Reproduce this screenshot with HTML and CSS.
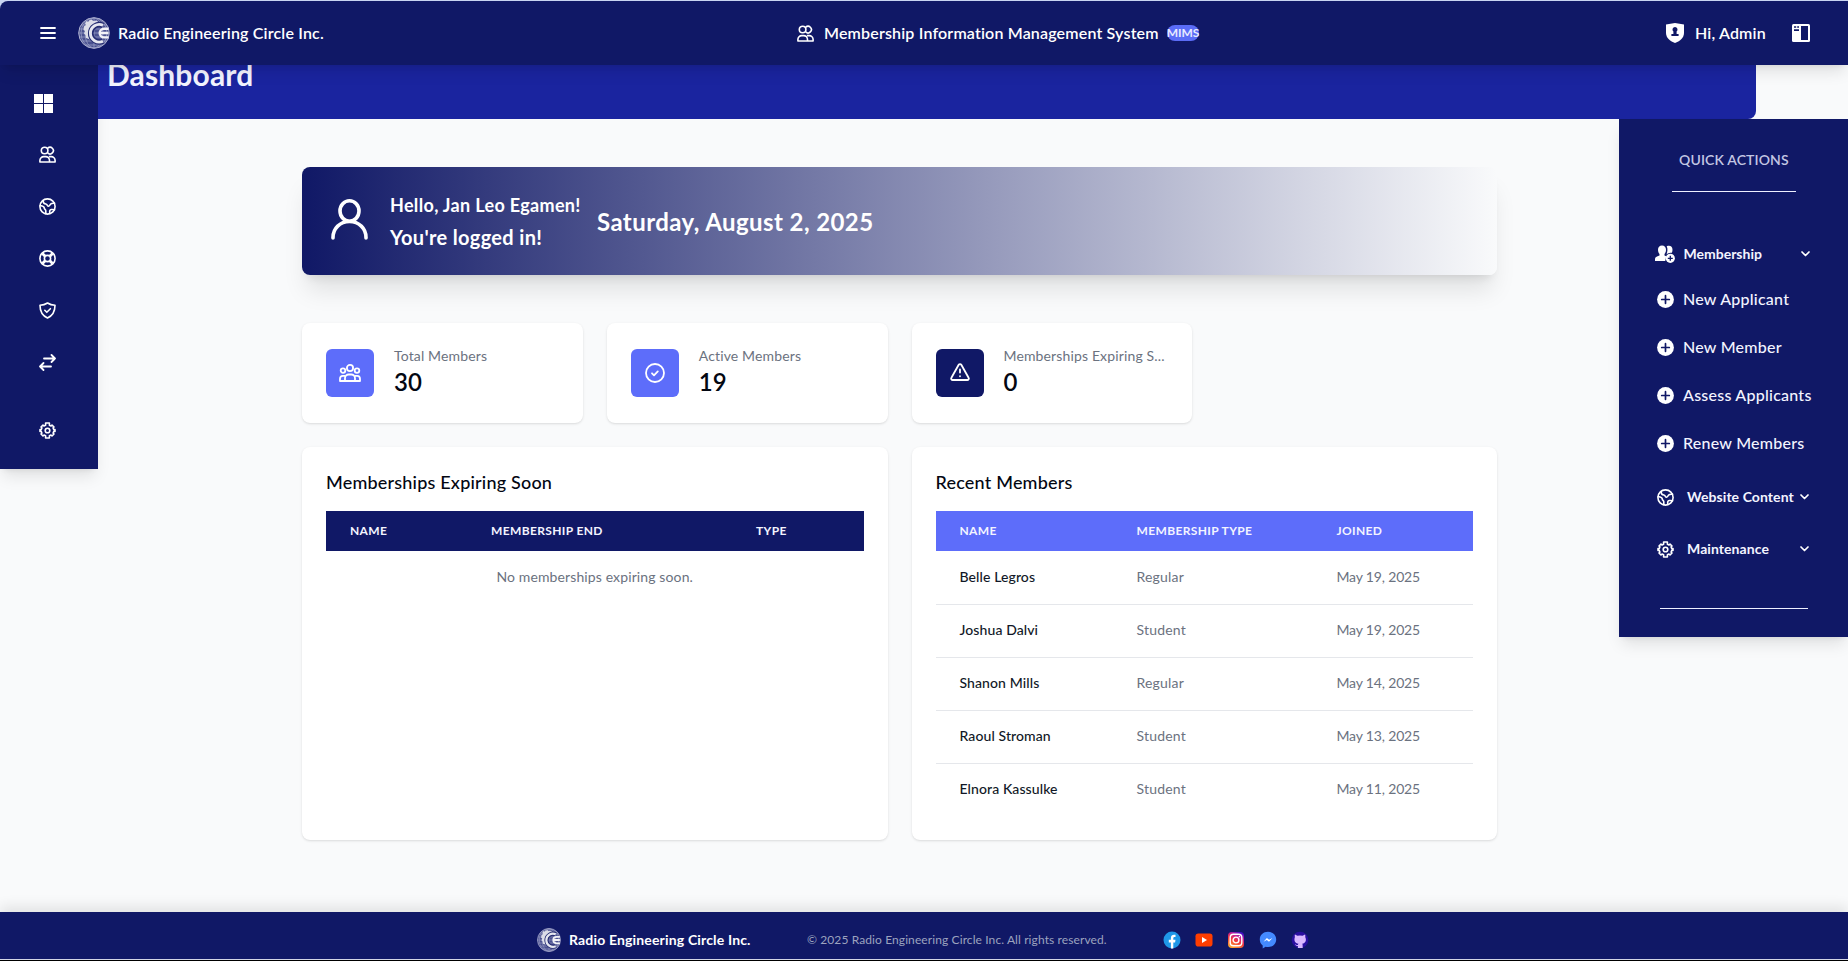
FILE: index.html
```
<!DOCTYPE html>
<html lang="en">
<head>
<meta charset="utf-8">
<title>Dashboard</title>
<link rel="stylesheet" href="styles.css">
</head>
<body>
<svg class="defs" width="0" height="0">
  <symbol id="logo" viewBox="0 0 32 32">
    <circle cx="16" cy="16" r="15.300" fill="#4a5190" stroke="#b4b7d4" stroke-width="1"/>
    <g fill="none" stroke="#989cc4" stroke-width=".8">
      <ellipse cx="16" cy="16" rx="9" ry="15"/><ellipse cx="16" cy="16" rx="13" ry="15"/>
      <path d="M16 1v30M1 16h30M3 8h26M2 12h28M2 20h28M3.500 24h25M8 28h16"/>
    </g>
    <path d="M19 3.500 15 4l-1-1.500-3 1L10.500 5 8.500 4 7 6.500 8 8 5.800 9.500 5.500 13l1.500 1-1 2.500 1.500 1.500.5 3 3 1 2 2a11 11 0 0 1 1.500-16L20 5z" fill="#dcdde8"/>
    <path d="M25 8.500a8.600 8.600 0 1 0 0 15.500" fill="none" stroke="#262d72" stroke-width="5.500"/>
    <path d="M25 8.300a8.800 8.800 0 1 0 0 15.900" fill="none" stroke="#e6e7f0" stroke-width="2.900"/>
    <path d="M30.500 11.800h-4.500a4.300 4.300 0 0 0 0 8.600h4.500M22.500 16h8" fill="none" stroke="#f2f2f7" stroke-width="2.400"/>
  </symbol>
  <symbol id="users" viewBox="0 0 17 17">
    <g fill="none" stroke="currentColor" stroke-width="1.600" stroke-linejoin="round">
      <circle cx="5.600" cy="4.500" r="3.300"/>
      <path d="M8.700 2.200a3.300 3.300 0 1 1 0 4.700"/>
      <path d="M.9 16v-1.500A3.900 3.900 0 0 1 4.800 10.600h1.800A3.900 3.900 0 0 1 10.500 14.500V16zM9.800 10.600h2.400a3.900 3.900 0 0 1 3.900 3.900V16h-5.600"/>
    </g>
  </symbol>
  <symbol id="globe" viewBox="0 0 17 17">
    <g fill="none" stroke="currentColor" stroke-width="1.600" stroke-linejoin="round" stroke-linecap="round">
      <circle cx="8.500" cy="8.500" r="7.600"/>
      <path d="M4 2.600c.2 2.300 1 3.200 2.800 3.400 1.500.2 1.300 2 2.400 2.200 1.400.3 1.700-1.500 2.700-2.400.9-.7 2.500-.5 3.600-.7M1.200 7.500c1.800.3 4 .8 4 2.300 0 1.700 1.600 1.400 1.600 3v3M10.800 15.500c-.3-2.300-.2-3.800 1.500-4 1.500-.2 2.300 0 3.200.3"/>
    </g>
  </symbol>
  <symbol id="gear" viewBox="0 0 17 17">
    <g fill="none" stroke="currentColor" stroke-width="1.600" stroke-linejoin="round">
      <path d="M16 7.600h-1.200l-.7-1.700.9-.9-2-2-1 .9-1.600-.7V1H6.600v2.200L5 3.900 4 3 2 5l.9.9-.7 1.700H1v1.800h1.200l.7 1.700L2 12l2 2 1-.9 1.600.7V16h3.800v-2.200l1.600-.7 1 .9 2-2-.9-.9.700-1.700H16z"/>
      <circle cx="8.500" cy="8.500" r="2.300"/>
    </g>
  </symbol>
  <symbol id="plus" viewBox="0 0 17 17">
    <circle cx="8.500" cy="8.500" r="8.400" fill="#fff"/>
    <path d="M8.500 4.700v7.600M4.700 8.500h7.600" stroke="#101866" stroke-width="1.700" stroke-linecap="round"/>
  </symbol>
  <symbol id="chevron" viewBox="0 0 9 6">
    <path d="M1 1l3.500 3.500L8 1" fill="none" stroke="#fff" stroke-width="1.700" stroke-linecap="round" stroke-linejoin="round"/>
  </symbol>
</svg>

<header class="topbar">
  <div class="topbar-left">
    <svg class="burger" viewBox="0 0 16 14"><path d="M1 2h14M1 7h14M1 12h14" stroke="#fff" stroke-width="1.800" stroke-linecap="round"/></svg>
    <svg class="logo"><use href="#logo"/></svg>
    <span class="brand">Radio Engineering Circle Inc.</span>
  </div>
  <div class="topbar-title">
    <svg class="icon"><use href="#users"/></svg>
    <span class="system">Membership Information Management System</span>
    <span class="badge">MIMS</span>
  </div>
  <div class="topbar-right">
    <svg class="shield" viewBox="0 0 18 20"><path d="M9 0 18 1.500V10c0 5-4.500 8.500-9 10C4.500 18.500 0 15 0 10V1.500z" fill="#fff"/><path d="M9 4a2.600 2.600 0 0 1 1.600 4.600V11h2v2H5.400v-2h2V8.600A2.600 2.600 0 0 1 9 4z" fill="#101866"/></svg>
    <span class="hi">Hi, Admin</span>
    <svg class="panel-icon" viewBox="0 0 18 18"><rect width="18" height="18" rx="1.500" fill="#fff"/><path d="M9 2h7v14H9zM2 2.200h2.200v1.600H2zM5.200 2.200h1.800v1.600H5.200zM2 5.300h5V7H2z" fill="#101866"/></svg>
  </div>
</header>

<div class="stage">
  <nav class="sidebar">
    <svg class="grid-icon" viewBox="0 0 19 19"><path d="M0 0h9v9H0zM10 0h9v9h-9zM0 10h9v9H0zM10 10h9v9h-9z" fill="#fff"/></svg>
    <svg class="icon"><use href="#users"/></svg>
    <svg class="icon"><use href="#globe"/></svg>
    <svg class="icon" viewBox="0 0 17 17"><g fill="none" stroke="#fff" stroke-width="1.600"><circle cx="8.500" cy="8.500" r="7.600"/><circle cx="8.500" cy="8.500" r="3.100"/><path d="M3.400 3.400l2.800 2.800M13.600 3.400l-2.800 2.800M3.400 13.600l2.800-2.800M13.600 13.600l-2.800-2.800" stroke-width="2.800"/></g></svg>
    <svg class="icon" viewBox="0 0 17 17"><g fill="none" stroke="#fff" stroke-width="1.600" stroke-linejoin="round" stroke-linecap="round"><path d="M8.500 1C6.300 2.400 3.800 3.100 1 3.200c0 5 1.500 10 7.500 12.800 6-2.800 7.500-7.800 7.500-12.800-2.800-.1-5.300-.8-7.500-2.200z"/><path d="M5.800 8.300l2 2 3.600-3.600"/></g></svg>
    <svg class="icon" viewBox="0 0 17 17"><path d="M5 4.500h11M12.500 1 16 4.500 12.500 8M12 12.500H1M4.500 9 1 12.500 4.500 16" fill="none" stroke="#fff" stroke-width="1.800" stroke-linejoin="round" stroke-linecap="round"/></svg>
    <svg class="icon settings"><use href="#gear"/></svg>
  </nav>

  <div class="band"><h1>Dashboard</h1></div>

  <main class="content">
    <section class="welcome">
      <svg class="person" viewBox="0 0 37 41"><g fill="none" stroke="#fff" stroke-width="3.600" stroke-linecap="round"><ellipse cx="18.500" cy="12" rx="9.500" ry="10.200"/><path d="M2 39v-.5C2 29.500 9 22.500 18.500 22.500S35 29.500 35 38.500v.5"/></g></svg>
      <div class="greeting"><p class="hello">Hello, Jan Leo Egamen!</p><p class="logged">You're logged in!</p></div>
      <p class="date">Saturday, August 2, 2025</p>
    </section>

    <section class="stats">
      <article class="card stat">
        <span class="tile"><svg class="tile-icon" viewBox="0 0 22 18"><g fill="none" stroke="#fff" stroke-width="1.800" stroke-linejoin="round"><circle cx="11" cy="4" r="3.100"/><circle cx="4" cy="6.600" r="2.300"/><circle cx="18" cy="6.600" r="2.300"/><path d="M6 17v-2.800c0-2.200 1.800-3.700 3.700-3.700h2.600c1.900 0 3.700 1.500 3.700 3.700V17zM6 17H1v-2.200c0-1.700 1.100-2.900 2.800-2.900H6M16 17h5v-2.200c0-1.700-1.100-2.900-2.800-2.900H16"/></g></svg></span>
        <div class="stat-text"><p class="label">Total Members</p><p class="value">30</p></div>
      </article>
      <article class="card stat">
        <span class="tile"><svg class="tile-icon round" viewBox="0 0 20 20"><g fill="none" stroke="#fff" stroke-width="1.800" stroke-linecap="round" stroke-linejoin="round"><circle cx="10" cy="10" r="9"/><path d="M7 10.300l2 2 3.800-3.900"/></g></svg></span>
        <div class="stat-text"><p class="label">Active Members</p><p class="value">19</p></div>
      </article>
      <article class="card stat">
        <span class="tile dark"><svg class="tile-icon warn" viewBox="0 0 20 18"><g fill="none" stroke="#fff" stroke-width="1.800" stroke-linecap="round" stroke-linejoin="round"><path d="M8.700 1.800a1.500 1.500 0 0 1 2.600 0l7.300 12.900a1.500 1.500 0 0 1-1.300 2.300H2.700a1.500 1.500 0 0 1-1.300-2.300zM10 6.500v3M10 13.200v.1"/></g></svg></span>
        <div class="stat-text"><p class="label">Memberships Expiring S...</p><p class="value">0</p></div>
      </article>
    </section>

    <section class="panels">
      <article class="card panel">
        <h2>Memberships Expiring Soon</h2>
        <table class="expiring">
          <colgroup><col><col><col></colgroup>
          <thead><tr><th>Name</th><th>Membership End</th><th>Type</th></tr></thead>
          <tbody><tr><td colspan="3" class="empty">No memberships expiring soon.</td></tr></tbody>
        </table>
      </article>
      <article class="card panel">
        <h2>Recent Members</h2>
        <table class="recent">
          <colgroup><col><col><col></colgroup>
          <thead><tr><th>Name</th><th>Membership Type</th><th>Joined</th></tr></thead>
          <tbody>
            <tr><td>Belle Legros</td><td>Regular</td><td>May 19, 2025</td></tr>
            <tr><td>Joshua Dalvi</td><td>Student</td><td>May 19, 2025</td></tr>
            <tr><td>Shanon Mills</td><td>Regular</td><td>May 14, 2025</td></tr>
            <tr><td>Raoul Stroman</td><td>Student</td><td>May 13, 2025</td></tr>
            <tr><td>Elnora Kassulke</td><td>Student</td><td>May 11, 2025</td></tr>
          </tbody>
        </table>
      </article>
    </section>
  </main>

  <aside class="quick">
    <h3>QUICK ACTIONS</h3>
    <hr class="rule-top">
    <div class="group first"><svg class="member-icon" viewBox="0 0 20 18"><path d="M7 .5c2.500 0 4 1.800 4 4.300 0 2-.7 3.300-1.500 4.300v1.400l1.700.8-1 4.700H0v-2c0-2 1.500-2.700 4.500-3.600V9C3.700 8 3 6.800 3 4.800 3 2.300 4.500.5 7 .5z" fill="#fff"/><path d="M11.700 1.300C15 0 17.500 1.500 17.500 4.800c0 1-.2 2.200-.6 3-2-.5-4 .2-5.400 1.800.9-2.800 1.500-5.500.2-8.300z" fill="#fff"/><circle cx="15.300" cy="13.300" r="4.600" fill="#fff"/><path d="M15.300 10.800v5M12.800 13.300h5" stroke="#101866" stroke-width="1.300"/></svg><span>Membership</span><svg class="chev"><use href="#chevron"/></svg></div>
    <a class="item"><svg class="icon"><use href="#plus"/></svg><span>New Applicant</span></a>
    <a class="item"><svg class="icon"><use href="#plus"/></svg><span>New Member</span></a>
    <a class="item"><svg class="icon"><use href="#plus"/></svg><span>Assess Applicants</span></a>
    <a class="item"><svg class="icon"><use href="#plus"/></svg><span>Renew Members</span></a>
    <div class="group website"><svg class="icon"><use href="#globe"/></svg><span>Website Content</span><svg class="chev"><use href="#chevron"/></svg></div>
    <div class="group"><svg class="icon"><use href="#gear"/></svg><span>Maintenance</span><svg class="chev"><use href="#chevron"/></svg></div>
    <hr class="rule-bottom">
  </aside>
</div>

<footer class="footer">
  <svg class="foot-logo"><use href="#logo"/></svg>
  <span class="foot-brand">Radio Engineering Circle Inc.</span>
  <span class="copy">© 2025 Radio Engineering Circle Inc. All rights reserved.</span>
  <div class="social">
    <svg viewBox="0 0 18 18"><circle cx="9" cy="9" r="8.500" fill="#1f97e8"/><path d="M7.900 17.400v-6H5.800V8.800h2.100V7.100C7.900 4.900 9.200 3.800 11 3.800c.8 0 1.500.1 1.500.1v2.200h-1c-.9 0-1.200.6-1.200 1.200v1.500h2.200l-.4 2.600h-1.800v6z" fill="#fff"/></svg>
    <svg viewBox="0 0 18 18"><rect x=".5" y="2.500" width="17" height="13" rx="2.800" fill="#ff3d00"/><path d="M7 6v6l5-3z" fill="#fff"/></svg>
    <svg viewBox="0 0 18 18"><defs><linearGradient id="ig" x1=".2" y1="1" x2=".7" y2="0"><stop offset="0" stop-color="#ffb02e"/><stop offset=".45" stop-color="#f43b3b"/><stop offset=".75" stop-color="#c41e9a"/><stop offset="1" stop-color="#4310c8"/></linearGradient></defs><rect x="1" y="1" width="16" height="16" rx="4" fill="url(#ig)"/><g fill="none" stroke="#fff" stroke-width="1.400"><rect x="3.200" y="3.200" width="11.600" height="11.600" rx="3.200"/><circle cx="9" cy="9" r="2.900"/></g><circle cx="12.400" cy="5.600" r=".8" fill="#fff"/></svg>
    <svg viewBox="0 0 18 18"><path d="M9 .8c4.700 0 8.200 3.300 8.200 7.600S13.700 16 9 16c-.8 0-1.600-.1-2.400-.3L3.700 17.400v-3C1.900 13 .8 11 .8 8.400.8 4.100 4.300.8 9 .8z" fill="#448aff"/><path d="M4.500 10.700l3.400-3.600 2.200 1.700 3.300-1.700-3.400 3.600-2.200-1.700z" fill="#fff"/></svg>
    <svg viewBox="0 0 18 18"><circle cx="9" cy="9" r="8.300" fill="#2a0fa0"/><path d="M4 3.500l2.400 1.300a9 9 0 0 1 5.200 0L14 3.500c.5 1.200.4 2 .2 2.600 1.700 3.500.2 6.300-3 6.700.5.500.5 1 .5 4.200H6.900v-2c-1.800.3-2.200-.8-3-1.700 1 0 1.600 1.100 3 .7 0-.6.200-.9.600-1.200-3.700-.4-4.800-3.300-3.600-6.700-.3-.8-.3-1.700.1-2.600z" fill="#d9b8ff"/></svg>
  </div>
</footer>
<div class="edge"></div>
</body>
</html>
```
FILE: styles.css
```
* { box-sizing: border-box; }
body { margin: 0; width: 1848px; height: 961px; overflow: hidden; display: flex; flex-direction: column; padding-top: 1px; background: #c9d4f2; color: #030712; font-family: Lato, "Open Sans", sans-serif; }
p, h1, h2, h3, hr { margin: 0; }
svg { display: block; flex: none; }
.defs { position: absolute; }
.icon { width: 17px; height: 17px; color: #fff; }

.topbar { position: relative; z-index: 3; flex: none; height: 64px; display: grid; grid-template-columns: 797px 1fr 182px; align-items: center; background: #101866; color: #fff; border-top-left-radius: 8px; box-shadow: 0 10px 15px -3px rgba(0,0,0,.1), 0 4px 6px -4px rgba(0,0,0,.1); font-size: 16px; font-weight: 600; letter-spacing: .17px; white-space: nowrap; }
.topbar-left { display: flex; align-items: center; padding-left: 40px; }
.burger { width: 16px; height: 14px; margin-right: 22px; }
.logo { width: 32px; height: 32px; margin-right: 8px; }
.topbar-title { display: flex; align-items: center; }
.topbar-title .icon { margin-right: 10px; }
.brand, .system, .hi { margin-bottom: 2px; }
.badge { width: 32px; height: 16px; margin-left: auto; margin-right: 467px; border-radius: 8px; background: #5b6cf6; color: #e8eaff; font-size: 12px; font-weight: 700; line-height: 15px; letter-spacing: -.1px; display: flex; justify-content: center; }
.topbar-right { display: flex; align-items: center; }
.shield { width: 18px; height: 20px; margin-right: 11px; }
.hi { width: 97px; }
.panel-icon { width: 18px; height: 18px; }

.stage { flex: none; height: 847px; display: grid; grid-template-columns: 98px 1fr 229px; grid-template-rows: 54px 1fr; background: #f9fafb; }
.sidebar { grid-column: 1; grid-row: 1 / 3; height: 404px; display: flex; flex-direction: column; align-items: center; gap: 35px; padding: 29px 3px 0 0; background: #101866; box-shadow: 0 10px 15px -3px rgba(0,0,0,.1), 0 4px 6px -4px rgba(0,0,0,.1); }
.grid-icon { width: 19px; height: 19px; margin-right: 8px; margin-bottom: -2px; }
.settings { margin-top: 16px; }
.band { grid-column: 2 / 4; grid-row: 1; margin-right: 92px; padding-left: 9px; background: #1a249f; border-bottom-right-radius: 8px; }
.band h1 { margin-top: -8px; color: #f3f4ff; font-size: 30px; line-height: 35px; font-weight: 700; letter-spacing: .15px; }
.content { grid-column: 2; grid-row: 2; width: 1399px; padding: 48px 0 0 204px; }

.welcome { height: 108px; display: flex; align-items: center; padding-left: 29px; border-radius: 8px; color: #fff; background: linear-gradient(90deg, #101866 0%, #f9fafb 100%); box-shadow: 0 20px 25px -5px rgba(0,0,0,.1), 0 8px 10px -6px rgba(0,0,0,.1); white-space: nowrap; }
.person { width: 37px; height: 41px; margin-right: 22px; margin-bottom: 4px; }
.greeting { width: 207px; }
.hello, .logged { font-size: 18px; line-height: 28px; font-weight: 700; letter-spacing: .33px; }
.logged { font-size: 20px; margin-top: 4px; }
.date { font-size: 24px; font-weight: 700; letter-spacing: .42px; margin-top: 1px; }

.card { border-radius: 8px; background: #fff; box-shadow: 0 1px 3px rgba(0,0,0,.1), 0 1px 2px -1px rgba(0,0,0,.1); }
.stats { display: grid; grid-template-columns: repeat(4, 1fr); gap: 24px; margin-top: 48px; }
.stat { height: 100px; display: flex; align-items: center; padding: 0 24px; white-space: nowrap; }
.stat-text { margin-bottom: 2px; }
.tile { width: 48px; height: 48px; margin-right: 20px; border-radius: 6px; display: flex; align-items: center; justify-content: center; background: #5d6dfa; }
.tile.dark { background: #101866; }
.tile-icon { width: 22px; height: 18px; }
.round { width: 20px; height: 20px; }
.warn { width: 20px; height: 18px; margin-bottom: 2px; }
.label { font-size: 14px; line-height: 20px; letter-spacing: .14px; color: #6b7280; }
.value { font-size: 24px; line-height: 32px; font-weight: 600; }

.panels { display: grid; grid-template-columns: 1fr 1fr; gap: 24px; margin-top: 24px; }
.panel { height: 393px; padding: 24px; }
.panel h2 { height: 40px; font-size: 18px; line-height: 22px; font-weight: 500; letter-spacing: .2px; white-space: nowrap; }
table { width: 100%; table-layout: fixed; border-collapse: collapse; font-size: 14px; }
th { height: 40px; padding: 0 0 2px 24px; text-align: left; text-transform: uppercase; font-size: 12px; font-weight: 700; letter-spacing: .36px; color: #f3f4ff; background: #101866; }
.recent th { background: #5d6dfa; }
td { height: 53px; padding: 0 0 2px 24px; color: #6b7280; border-top: 1px solid #e5e7eb; }
tbody tr:first-child td { border-top: 0; }
.recent td:first-child { color: #111827; font-weight: 500; letter-spacing: .1px; }
.recent td:nth-child(2) { letter-spacing: .2px; }
.recent td:nth-child(3) { letter-spacing: -.17px; }
.expiring .empty { text-align: center; padding: 0 0 2px; letter-spacing: .12px; }
.expiring col:nth-child(1) { width: 141px; }
.expiring col:nth-child(2) { width: 265px; }
.recent col:nth-child(1) { width: 177px; }
.recent col:nth-child(2) { width: 200px; }

.quick { grid-column: 3; grid-row: 2; height: 518px; padding-left: 36px; background: #101866; color: #f3f4ff; box-shadow: 0 10px 15px -3px rgba(0,0,0,.1), 0 4px 6px -4px rgba(0,0,0,.1); white-space: nowrap; }
.quick h3 { margin: 31px 0 0 24px; font-size: 14px; line-height: 20px; font-weight: 600; letter-spacing: .13px; color: #c3c6e3; }
.quick hr { height: 1px; border: 0; background: #eef0ff; }
.rule-top { width: 124px; margin: 21px 0 0 17px; }
.rule-bottom { width: 148px; margin: 33px 0 0 5px; }
.group { height: 52px; display: flex; align-items: center; font-size: 14px; font-weight: 700; letter-spacing: .08px; }
.group span, .item span { margin-bottom: 2px; }
.first { height: 48px; margin-top: 38px; letter-spacing: 0; }
.first + .item { margin-top: -3px; }
.member-icon { width: 20px; height: 18px; margin-right: 8.500px; }
.group .icon { margin: 0 13.500px 0 1.500px; }
.group span { width: 113px; }
.first span { width: 117px; }
.chev { width: 9px; height: 6px; }
.item { height: 48px; display: flex; align-items: center; font-size: 16px; font-weight: 500; letter-spacing: .24px; }
.item .icon { margin: 0 9.500px 0 1.500px; }
.website { margin-top: 4px; }

.footer { position: relative; flex: none; height: 47px; display: flex; align-items: center; padding-left: 537px; background: #101866; color: #fff; box-shadow: 0 -6px 12px rgba(0,0,0,.09); white-space: nowrap; }
.foot-logo { width: 24px; height: 24px; margin-right: 8px; }
.foot-brand { width: 238px; font-size: 14px; font-weight: 700; letter-spacing: .16px; }
.copy { width: 356px; font-size: 12px; letter-spacing: .1px; color: #9ca3bf; }
.social { display: flex; gap: 14px; margin-top: 8px; }
.social svg { width: 18px; height: 18px; }
.footer > :not(.social) { margin-top: 8px; }
.edge { flex: none; height: 2px; border-bottom: 1px solid #000; background: #d5d8e8; }
```
